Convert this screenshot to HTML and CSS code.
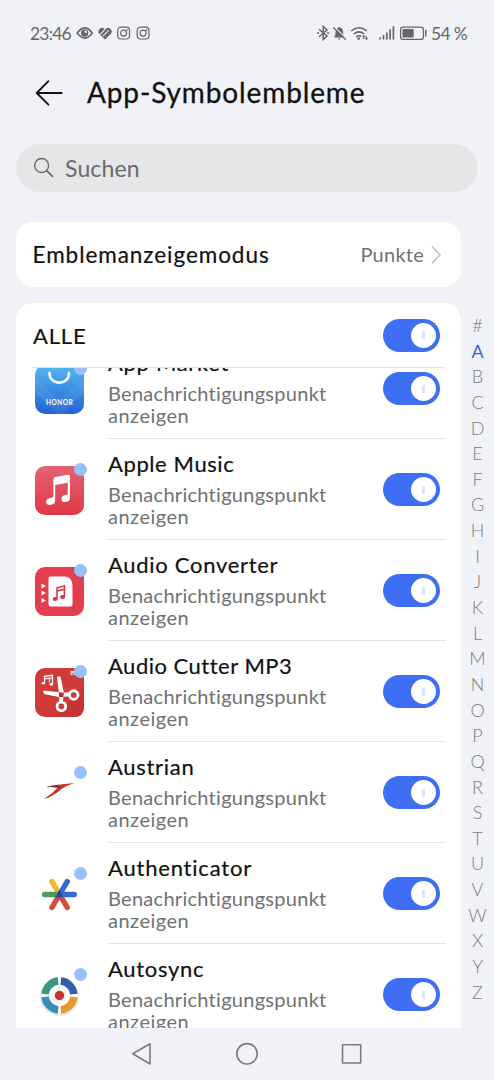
FILE: index.html
```html
<!DOCTYPE html>
<html lang="de">
<head>
<meta charset="utf-8">
<title>App-Symbolembleme</title>
<link rel="stylesheet" href="styles.css">
</head>
<body>
<div class="screen">
  <div class="status">
    <span class="time">23:46</span>
    <svg class="status-left" width="78" height="20" viewBox="0 0 78 20" fill="none" stroke="#65676b">
      <path d="M1.200 10Q9 -.2 16.200 10Q9 20.200 1.200 10Z" stroke-width="1.600"/>
      <circle cx="8.700" cy="10" r="3.700" fill="#65676b" stroke="none"/><circle cx="9.800" cy="8.700" r="1.200" fill="#f1f2f7" stroke="none"/>
      <path d="M29 16.500L23.200 10.700Q21.600 8.500 23 6.400Q25.200 3.900 28 5.300L29 6.100L30 5.300Q32.800 3.900 35.200 6.400Q36.600 8.500 34.900 10.700Z" fill="#65676b" stroke="none"/>
      <path d="M24.300 11.400L30.200 5M27 13.200L32.600 7.400" stroke="#f1f2f7" stroke-width="1.100"/>
      <rect x="41.700" y="4.200" width="11.800" height="11.800" rx="3.200" stroke-width="1.200"/><circle cx="47.600" cy="10.100" r="3" stroke-width="1.200"/><circle cx="51" cy="6.900" r=".8" fill="#65676b" stroke="none"/>
      <rect x="61.200" y="4.200" width="11.800" height="11.800" rx="3.200" stroke-width="1.200"/><circle cx="67.100" cy="10.100" r="3" stroke-width="1.200"/><circle cx="70.500" cy="6.900" r=".8" fill="#65676b" stroke="none"/>
    </svg>
    <svg class="status-right" width="112" height="20" viewBox="0 0 112 20" fill="none" stroke="#65676b">
      <path d="M3 6.200L11 13L7.200 16.500V3.500L11 7L3 13.800" stroke-width="1.500"/>
      <path d="M1 10h2M11 10h2.200" stroke-width="1.700"/>
      <path d="M18 14.500Q19.700 12.500 19.700 8.800Q19.800 5.300 22.500 4.600Q23.200 3.200 24 4.600Q27 5.400 27 9Q27 12.500 28.700 14.500ZM21.500 15.600H25Q23.300 17.800 21.500 15.600Z" fill="#65676b" stroke="none"/>
      <path d="M18.500 4L30 15.400" stroke="#f1f2f7" stroke-width="1.200"/><path d="M17.300 4.500L29.800 16.800" stroke-width="1.200"/>
      <path d="M35.200 8Q43 1.500 50.800 8M37.800 11Q43 6.800 48.200 11M40.200 13.800Q43 11.800 45.200 13.500" stroke-width="1.600"/><circle cx="42.700" cy="15.600" r="1.300" fill="#65676b" stroke="none"/>
      <path d="M47.700 12.500V16M50.400 13V16.500" stroke-width="1.300"/><path d="M46.400 14L47.700 12.200L49 14M49.100 15L50.400 16.800L51.700 15" stroke-width=".7"/>
      <path d="M64.200 14.200V16.500M67.500 12V16.500M70.800 9.500V16.500M74.100 6.500V16.500M77.400 3.200V16.500" stroke-width="1.700"/>
      <rect x="84.600" y="4.100" width="22.800" height="12.300" rx="2.500" stroke-width="1.300"/><rect x="86.400" y="6" width="11.300" height="8.500" rx=".8" fill="#65676b" stroke="none"/><path d="M109.800 7V13.500" stroke-width="1.500"/>
    </svg>
    <span class="percent">54 %</span>
  </div>

  <header class="header">
    <svg width="28" height="28" viewBox="0 0 28 28" fill="none" stroke="#111" stroke-width="1.800" stroke-linecap="round" stroke-linejoin="round"><path d="M13.400 2.200L1.700 14L13.400 25.700M2 14H26.700"/></svg>
    <h1 class="title">App-Symbolembleme</h1>
  </header>

  <div class="search">
    <svg width="22" height="22" viewBox="0 0 22 22" fill="none" stroke="#696a6d" stroke-linecap="round"><circle cx="8.600" cy="8.500" r="7" stroke-width="1.400"/><path d="M13.700 13.700L19.500 19.400" stroke-width="1.700"/></svg>
    <span class="search-label">Suchen</span>
  </div>

  <main class="content">
    <div class="cards">
      <section class="mode">
        <span class="mode-label">Emblemanzeigemodus</span>
        <span class="mode-value">Punkte</span>
        <svg width="11" height="20" viewBox="0 0 11 20" fill="none" stroke="#c6c6c8" stroke-width="1.800" stroke-linecap="round" stroke-linejoin="round"><path d="M1.500 2.200L9 10L1.500 17.800"/></svg>
      </section>

      <section class="apps">
        <div class="all"><span class="all-label">ALLE</span><span class="toggle"></span></div>
        <div class="list">
          <div class="row">
            <div class="icon">
              <svg width="49" height="49" viewBox="0 0 49 49">
                <defs><linearGradient id="blue" x1="0" y1="0" x2="0" y2="1"><stop offset="0" stop-color="#55b9ee"/><stop offset=".5" stop-color="#3a8fe5"/><stop offset="1" stop-color="#2462d2"/></linearGradient></defs>
                <rect width="49" height="49" rx="10" fill="url(#blue)"/>
                <path d="M0 12L24.500 36L49 12V27L27 49H22L0 27Z" fill="#fff" opacity=".07"/><path d="M0 42L42 0M7 0L49 42M0 20L29 49M49 20L20 49" stroke="#1d65c4" stroke-width=".6" opacity=".35"/>
                <path d="M14.500 8C14.500 21 34 21 34 8" fill="none" stroke="#edf8ff" stroke-width="2.800" stroke-linecap="round"/>
                <text class="honor" x="24.700" y="40.300" text-anchor="middle">HONOR</text>
              </svg><i class="dot"></i>
            </div>
            <div class="text"><b class="name">App Market</b><span class="sub">Benachrichtigungspunkt<br><span class="sub-end">anzeigen</span></span></div><span class="toggle"></span>
          </div>
          <div class="row">
            <div class="icon">
              <svg width="49" height="49" viewBox="0 0 49 49">
                <defs><linearGradient id="red" x1="0" y1="0" x2="0" y2="1"><stop offset="0" stop-color="#e26473"/><stop offset="1" stop-color="#e33645"/></linearGradient></defs>
                <rect width="49" height="49" rx="10" fill="url(#red)"/>
                <path d="M18.400 13.300Q18.500 11.500 20.200 11.100L33 8.800Q35 8.500 35 10.300V31.500Q35 35.500 30.500 36Q26.500 36.300 26.400 33.200Q26.500 29.700 30.300 29.100Q32.800 28.900 32.800 27.500V16.700L20.200 19V34.500Q20 38.500 15 39Q11 39 11 35.700Q11.400 32.500 15 32Q18.400 31.600 18.400 29.500Z" fill="#fff"/>
              </svg><i class="dot"></i>
            </div>
            <div class="text"><b class="name n-music">Apple Music</b><span class="sub">Benachrichtigungspunkt<br><span class="sub-end">anzeigen</span></span></div><span class="toggle"></span>
          </div>
          <div class="row">
            <div class="icon">
              <svg width="49" height="49" viewBox="0 0 49 49">
                <rect width="49" height="49" rx="10" fill="#e43e4d"/>
                <path d="M13.500 11Q13.500 9.500 15.500 9.500H30Q37.500 10 37.500 19V37Q37.500 39.500 35 39.500H16Q13.500 39.500 13.500 37Z" fill="#fff"/>
                <path d="M6.500 16.500L11 19L6.500 21.500ZM6.500 23.500L11 26L6.500 28.500ZM6.500 31L11 33.500L6.500 36Z" fill="#fff"/>
                <path d="M22 31.500V20.800L29.400 19V29.500M22 24L29.400 22.200" fill="none" stroke="#d93249" stroke-width="1.500"/><ellipse cx="20.200" cy="32" rx="2.500" ry="2" fill="#d93249"/><ellipse cx="27.600" cy="30" rx="2.500" ry="2" fill="#d93249"/>
              </svg><i class="dot"></i>
            </div>
            <div class="text"><b class="name">Audio Converter</b><span class="sub">Benachrichtigungspunkt<br><span class="sub-end">anzeigen</span></span></div><span class="toggle"></span>
          </div>
          <div class="row">
            <div class="icon">
              <svg width="49" height="49" viewBox="0 0 49 49" fill="none">
                <rect width="49" height="49" rx="10" fill="#ce3b38"/>
                <path d="M19 49L49 19V39Q49 49 39 49Z" fill="#c63434"/>
                <g stroke="#8f2022" opacity=".35" transform="translate(.7 1.200)"><path d="M24 9.500L27 33M9.500 24.500L34 27" stroke-width="4"/><circle cx="26.400" cy="38.200" r="4.400" stroke-width="3"/><circle cx="38.500" cy="27" r="4.400" stroke-width="3"/></g>
                <path d="M22 9Q24 7.300 25.800 9.500L28.800 24.400L27.900 34.500L24.400 34L24 26.500ZM8.400 22.400Q8 25.600 10.500 26.400L24 29L34 28.600L34.400 24.500L24.500 24.300Z" fill="#fff"/>
                <circle cx="26.400" cy="38.400" r="4.300" stroke="#fff" stroke-width="2.900"/><circle cx="38.700" cy="27" r="4.300" stroke="#fff" stroke-width="2.900"/><circle cx="26.500" cy="26.300" r=".7" fill="#bd3030"/>
                <path d="M9.500 15V8.300L17.500 7.300V16M9.500 10.800L17.500 9.800" stroke="#fff" stroke-width="1.300"/><ellipse cx="8.300" cy="15.200" rx="1.700" ry="1.300" fill="#fff"/><ellipse cx="16.200" cy="16.400" rx="1.700" ry="1.300" fill="#fff"/><path d="M14.300 10.800V14.500" stroke="#fff"/><rect x="35.500" y="3" width="7" height="4" fill="#f4e8e8"/><path d="M37 4.500v1.500h2v-1.500" stroke="#ce3b38" stroke-width=".8"/>
              </svg><i class="dot"></i>
            </div>
            <div class="text"><b class="name n-cutter">Audio Cutter MP3</b><span class="sub">Benachrichtigungspunkt<br><span class="sub-end">anzeigen</span></span></div><span class="toggle"></span>
          </div>
          <div class="row">
            <div class="icon">
              <svg width="49" height="49" viewBox="0 0 49 49"><path d="M11 18.300Q17 16 25 15.500L39.500 14Q32 16.500 28 19Q21 25 13.500 28.700L9 29.700Q18 24.500 22.500 18.600Q18 17.800 11 18.300Z" fill="#ce3028"/><path d="M11 18.300Q16 16.700 22 16.500Q26 17 24 19L22.500 18.600Q17 17.700 11 18.300Z" fill="#79251f"/></svg><i class="dot"></i>
            </div>
            <div class="text"><b class="name">Austrian</b><span class="sub">Benachrichtigungspunkt<br><span class="sub-end">anzeigen</span></span></div><span class="toggle"></span>
          </div>
          <div class="row">
            <div class="icon">
              <svg width="49" height="49" viewBox="0 0 49 49" stroke-width="5.400" stroke-linecap="round" fill="none"><path d="M17 11.600L24.600 24.500" stroke="#efb62f"/><path d="M17 37.400L24.600 24.500L32.200 37.400" stroke="#d64c41" stroke-linejoin="round"/><path d="M9.600 24.500H24" stroke="#4b9d59"/><path d="M32.200 11.600L24.600 24.500H39.300" stroke="#3369d5"/><path d="M24.600 19.500L28 27.200H20.500Z" fill="#27468f" stroke="none"/></svg><i class="dot"></i>
            </div>
            <div class="text"><b class="name n-auth">Authenticator</b><span class="sub">Benachrichtigungspunkt<br><span class="sub-end">anzeigen</span></span></div><span class="toggle"></span>
          </div>
          <div class="row">
            <div class="icon">
              <svg class="sync" width="49" height="49" viewBox="0 0 49 49"><circle cx="24.500" cy="24.500" r="18.500" fill="#fff"/><g fill="none" stroke-width="7.500"><path d="M10.100 23.200A14.500 14.500 0 0 1 23.200 10.100" stroke="#38977f"/><path d="M25.800 10.100A14.500 14.500 0 0 1 38.900 23.200" stroke="#345eae"/><path d="M38.900 25.800A14.500 14.500 0 0 1 25.800 38.900" stroke="#e69a2c"/><path d="M23.200 38.900A14.500 14.500 0 0 1 10.100 25.800" stroke="#378db5"/></g><circle cx="24.500" cy="24.500" r="8" fill="#f6f4f3"/><circle cx="24.500" cy="24.500" r="4.700" fill="#bf3532"/></svg><i class="dot"></i>
            </div>
            <div class="text"><b class="name">Autosync</b><span class="sub">Benachrichtigungspunkt<br><span class="sub-end">anzeigen</span></span></div><span class="toggle"></span>
          </div>
        </div>
      </section>
    </div>
    <nav class="index"><span>#</span><span class="current">A</span><span>B</span><span>C</span><span>D</span><span>E</span><span>F</span><span>G</span><span>H</span><span>I</span><span>J</span><span>K</span><span>L</span><span>M</span><span>N</span><span>O</span><span>P</span><span>Q</span><span>R</span><span>S</span><span>T</span><span>U</span><span>V</span><span>W</span><span>X</span><span>Y</span><span>Z</span></nav>
  </main>

  <footer class="navbar">
    <svg width="494" height="52" viewBox="0 0 494 52" fill="none" stroke="#7a7b80" stroke-width="1.600" stroke-linejoin="round"><path d="M132.800 25.800L150 15.800V36Z"/><circle cx="247" cy="25.800" r="10.200"/><rect x="342.500" y="16.800" width="18.200" height="18.200" rx=".5"/></svg>
  </footer>
</div>
</body>
</html>
```
FILE: styles.css
```css
* { box-sizing: border-box; }
body { margin: 0; background: #f1f2f7; font-family: Lato, "Noto Sans", sans-serif; font-variant-ligatures: none; color: #111; }
svg { display: block; flex: none; }
.screen { width: 494px; height: 1080px; overflow: hidden; display: flex; flex-direction: column; }
.status { height: 66px; padding: 0 0 0 30px; display: flex; align-items: center; color: #65676b; font-size: 17.500px; flex: none; white-space: nowrap; }
.time { width: 46px; letter-spacing: -.8px; }
.status-right { margin-left: 162px; }
.percent { margin-left: 3px; letter-spacing: -.7px; }
.header { height: 54px; padding-left: 35px; display: flex; align-items: center; gap: 24px; flex: none; }
.title { margin: -2px 0 0; font-size: 28px; line-height: 36px; font-weight: 400; letter-spacing: .88px; -webkit-text-stroke: .3px #111; white-space: nowrap; }
.search { margin: 24px 16px 0; height: 48px; border-radius: 24px; background: #e5e6e8; display: flex; align-items: center; padding-left: 17px; gap: 10px; color: #696a6d; font-size: 23px; letter-spacing: .15px; flex: none; }
.content { display: flex; margin-top: 30px; height: 806px; padding-left: 16px; flex: none; }
.cards { width: 445px; display: flex; flex-direction: column; gap: 16px; }
.mode { height: 65px; border-radius: 17px; background: #fff; display: flex; align-items: center; padding: 0 19px 0 16.500px; font-size: 22px; flex: none; }
.mode-label { flex: 1; font-size: 22.500px; letter-spacing: .95px; -webkit-text-stroke: .2px #111; }
.mode-value { color: #707173; font-size: 20px; letter-spacing: .25px; margin: -1px 7px 0 0; }
.apps { flex: 1; min-height: 0; background: #fff; border-radius: 17px 17px 0 0; display: flex; flex-direction: column; }
.all { height: 65px; margin: 0 16px; padding: 0 5px 0 1px; border-bottom: 1px solid #e3e4e5; display: flex; align-items: center; justify-content: space-between; font-size: 22px; flex: none; }
.all-label { letter-spacing: .8px; -webkit-text-stroke: .2px #111; }
.toggle { width: 57px; height: 33px; border-radius: 17px; background: #3d6ef3; padding: 4px; display: flex; justify-content: flex-end; flex: none; }
.toggle::before { content: ""; width: 25px; height: 25px; border-radius: 50%; background: linear-gradient(#dfe3fa, #dfe3fa) center / 3px 8px no-repeat #fff; }
.list { flex: 1; min-height: 0; overflow: hidden; padding-left: 19px; }
.row { height: 101px; display: flex; align-items: stretch; }
.row:first-child { margin-top: -30px; }
.row > .toggle { margin: 34px 0 0 -63px; }
.icon { width: 73px; padding-top: 27px; position: relative; flex: none; }
.dot { position: absolute; width: 13px; height: 13px; left: 39px; top: 24px; border-radius: 50%; background: #98c1fa; }
.honor { font: 700 6.500px Lato, sans-serif; fill: #fff; letter-spacing: .5px; }
.sync { filter: drop-shadow(0 1px 1px #c8cbd0); }
.text { width: 338px; border-bottom: 1px solid #e3e4e5; padding-top: 11px; display: flex; flex-direction: column; white-space: nowrap; }
.row:last-child .text { border: 0; }
.name { font-size: 22px; line-height: 28px; font-weight: 400; letter-spacing: .7px; -webkit-text-stroke: .2px #111; }
.n-music { letter-spacing: .6px; }
.n-cutter { letter-spacing: .5px; }
.n-auth { letter-spacing: .8px; }
.sub { color: #707173; font-size: 20px; line-height: 22px; letter-spacing: .28px; margin-top: 5px; }
.sub-end { letter-spacing: .5px; }
.index { width: 33px; display: flex; flex-direction: column; align-items: center; padding-top: 90px; color: #7b7c81; font-size: 18px; font-weight: 300; }
.index span { height: 25.650px; line-height: 26px; flex: none; }
.index .current { color: #3766d2; font-weight: 400; }
.navbar { height: 52px; background: #f1f2f7; flex: none; }
```
